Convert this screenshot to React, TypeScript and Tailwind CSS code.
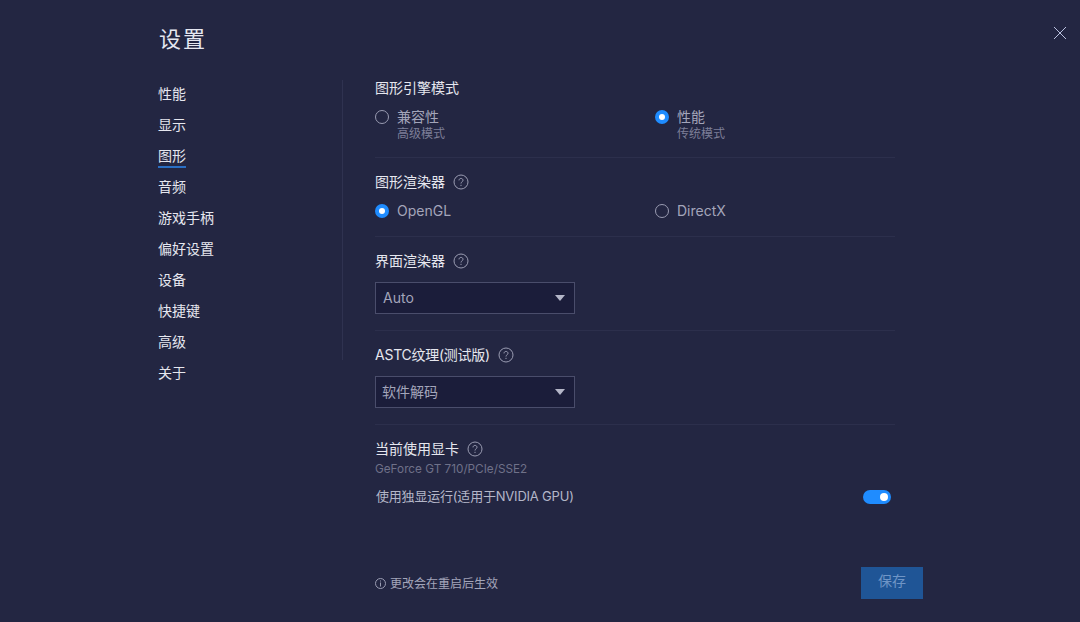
import { useState } from "react";

const font = "font-['Inter','Noto_Sans_CJK_SC',sans-serif]";
const navItems = ["性能", "显示", "图形", "音频", "游戏手柄", "偏好设置", "设备", "快捷键", "高级", "关于"];

function Help() {
  return (
    <svg width="16" height="16" viewBox="0 0 16 16" fill="none" stroke="#9a9cb2" strokeWidth="1">
      <circle cx="8" cy="8" r="7" />
      <path d="M6 6.4c0-1.2.9-2 2-2s2 .8 2 1.9c0 1.500-2 1.500-2 3.200" />
      <path d="M8 10.800v1.200" />
    </svg>
  );
}

function Heading({ text, help = true, tight }: { text: string; help?: boolean; tight?: boolean }) {
  return (
    <div className="flex items-center gap-2 h-5 text-[14px] leading-5 text-[#e6e7ef]">
      <span className={tight ? "tracking-[-0.25px]" : ""}>{text}</span>
      {help && <Help />}
    </div>
  );
}

function Radio({ on, label, sub }: { on?: boolean; label: string; sub?: string }) {
  return (
    <div className="flex w-[280px] shrink-0 items-start gap-[8px]">
      <div
        className={
          on
            ? "mt-[3px] flex h-[14px] w-[14px] items-center justify-center rounded-full bg-[#1f8cff]"
            : "mt-[3px] flex h-[14px] w-[14px] items-center justify-center rounded-full border border-[#9a9cb2]"
        }
      >
        {on && <div className="h-[6px] w-[6px] rounded-full bg-white" />}
      </div>
      <div>
        <div className="text-[14px] leading-5 text-[#a3a5ba]">{label}</div>
        {sub && <div className="text-[12px] leading-[14px] text-[#7d7f98]">{sub}</div>}
      </div>
    </div>
  );
}

function Select({ value, cjk }: { value: string; cjk?: boolean }) {
  return (
    <div className="mt-[11px] flex h-[32px] w-[200px] items-center justify-between border border-[#4a4d6b] bg-[#1b1d3a] pb-[2px] pl-[7px] pr-[9px] text-[14px] text-[#a3a5ba]">
      <span className={cjk ? "-ml-px" : ""}>{value}</span>
      <div className="mt-[2px] h-0 w-0 border-x-[5px] border-t-[6px] border-x-transparent border-t-[#b4b6c8]" />
    </div>
  );
}

export default function App() {
  const [active] = useState("图形");
  return (
    <div className={`relative flex h-[622px] w-[1080px] flex-col overflow-hidden bg-[#232642] ${font}`}>
      <button className="absolute right-[13px] top-[26px]">
        <svg width="14" height="14" viewBox="0 0 14 14" stroke="#b9c0de" strokeWidth="1">
          <path d="M1 1l12 12M13 1L1 13" />
        </svg>
      </button>
      <div className="h-[80px] pl-[159px] pt-[21px] text-[22px] leading-9 tracking-[2px] text-[#e4e6f0]">设置</div>
      <div className="flex items-start">
        <nav className="ml-[158px] flex h-[280px] w-[185px] flex-col border-r border-[#2f3250] pt-[3px]">
          {navItems.map((item) => (
            <div key={item} className="h-[31px] shrink-0 text-[14px] leading-[22px] text-[#e6e7ef]">
              <span className={item === active ? "inline-block h-[22px] border-b-2 border-[#2a6fc4] leading-[20px]" : ""}>
                {item}
              </span>
            </div>
          ))}
        </nav>
        <main className="-mt-[2px] ml-[32px] w-[520px]">
          <section className="h-[80px] border-b border-[#2c2f4c]">
            <Heading text="图形引擎模式" help={false} />
            <div className="mt-[9px] flex">
              <Radio label="兼容性" sub="高级模式" />
              <Radio on label="性能" sub="传统模式" />
            </div>
          </section>
          <section className="h-[79px] border-b border-[#2c2f4c] pt-[14px]">
            <Heading text="图形渲染器" />
            <div className="mt-[9px] flex">
              <Radio on label="OpenGL" />
              <Radio label="DirectX" />
            </div>
          </section>
          <section className="h-[94px] border-b border-[#2c2f4c] pt-[14px]">
            <Heading text="界面渲染器" />
            <Select value="Auto" />
          </section>
          <section className="h-[94px] border-b border-[#2c2f4c] pt-[14px]">
            <Heading text="ASTC纹理(测试版)" tight />
            <Select value="软件解码" cjk />
          </section>
          <section className="pt-[14px]">
            <Heading text="当前使用显卡" />
            <div className="mt-[2px] text-[11.75px] leading-[16px] text-[#6f7189]">GeForce GT 710/PCIe/SSE2</div>
            <div className="mt-[11px] flex items-center justify-between pl-px pr-[4px]">
              <span className="text-[13px] leading-4 tracking-[-0.2px] text-[#b4b6c8]">使用独显运行(适用于NVIDIA GPU)</span>
              <div className="mt-[2px] flex h-[14px] w-[28px] items-center justify-end rounded-full bg-[#1f8cff] pr-[3px]">
                <div className="h-[8px] w-[8px] rounded-full bg-white" />
              </div>
            </div>
          </section>
          <footer className="mt-[63px] flex w-[548px] items-center justify-between">
            <div className="flex items-center gap-[4px] text-[12px] text-[#a3a5ba]">
              <svg width="11" height="11" viewBox="0 0 11 11" fill="none" stroke="#9a9cb2">
                <circle cx="5.500" cy="5.500" r="5" />
                <path d="M5.500 2.500v1M5.500 4.500v4" />
              </svg>
              <span className="mt-[2px]">更改会在重启后生效</span>
            </div>
            <button className="h-[32px] w-[62px] bg-[#1f5596] pb-[5px] text-[14px] text-[#6f95c6]">保存</button>
          </footer>
        </main>
      </div>
    </div>
  );
}
